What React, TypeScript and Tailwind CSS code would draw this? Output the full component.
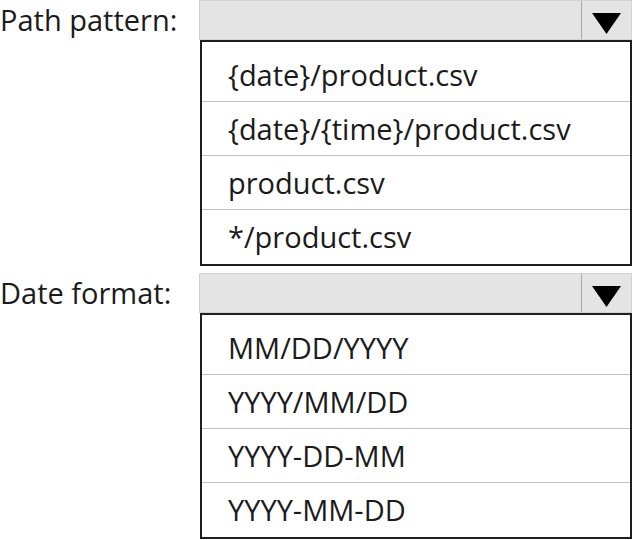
import type { ReactNode } from "react";

const pathOptions = [
	"{date}/product.csv",
	"{date}/{time}/product.csv",
	"product.csv",
	"*/product.csv",
];

const dateOptions = ["MM/DD/YYYY", "YYYY/MM/DD", "YYYY-DD-MM", "YYYY-MM-DD"];

export default function App() {
	return (
		<div
			className="w-[632px] h-[540px] bg-white text-[#1b1b1b] overflow-hidden"
			style={{ fontFamily: '"Open Sans", "Noto Sans", sans-serif' }}
		>
			<DropdownField label="Path pattern:" options={pathOptions} />
			<div className="mt-[7px]">
				<DropdownField label="Date format:" options={dateOptions} />
			</div>
		</div>
	);
}

function DropdownField({
	label,
	options,
}: {
	label: string;
	options: string[];
}) {
	return (
		<div className="flex flex-col">
			<div className="flex">
				<div className="w-[199px] h-[40px] text-[29px] leading-[40px] whitespace-nowrap">
					{label}
				</div>
				<div className="flex flex-1 h-[40px] bg-[#e4e4e4] border border-[#d2d2d2]">
					<div className="flex-1"></div>
					<div className="w-[50px] border-l border-[#a8a8a8] flex items-center justify-center pt-[6px]">
						<Arrow />
					</div>
				</div>
			</div>
			<div className="ml-[200px] w-[432px] border-2 border-[#1e1e1e] pt-[6px]">
				{options.map((opt, i) => (
					<Row key={opt} last={i === options.length - 1}>
						{opt}
					</Row>
				))}
			</div>
		</div>
	);
}

function Row({ children, last }: { children: ReactNode; last: boolean }) {
	return (
		<div
			className={
				last
					? "h-[54px] flex items-center pl-[26px] text-[29px] whitespace-nowrap"
					: "h-[54px] flex items-center pl-[26px] text-[29px] whitespace-nowrap border-b border-[#c4c4c4]"
			}
		>
			{children}
		</div>
	);
}

function Arrow() {
	return (
		<svg width="29" height="21" viewBox="0 0 29 21">
			<polygon points="0,0 29,0 14.5,21" fill="#000" />
		</svg>
	);
}
